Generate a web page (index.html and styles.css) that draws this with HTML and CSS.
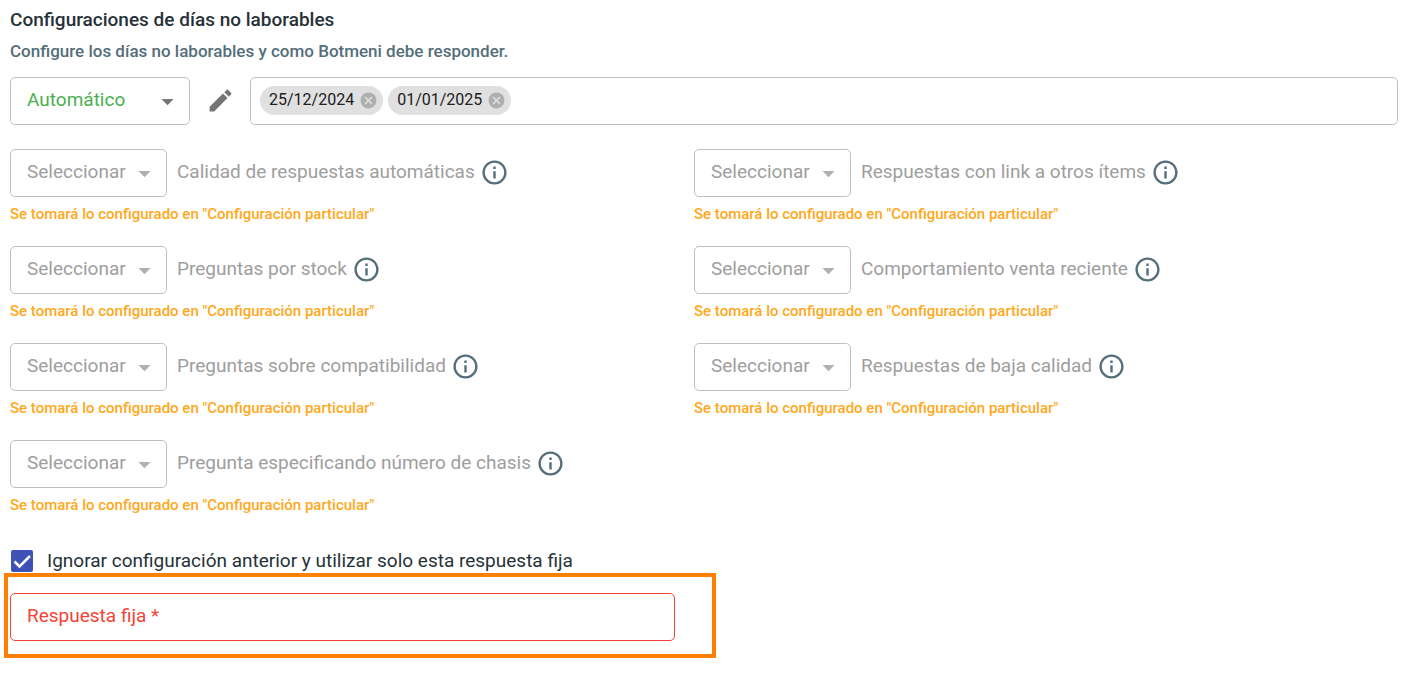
FILE: index.html
```html
<!DOCTYPE html>
<html lang="es">
<head>
<meta charset="utf-8">
<title>Configuraciones de días no laborables</title>
<link rel="stylesheet" href="styles.css">
</head>
<body>
<svg class="sprite" aria-hidden="true">
  <symbol id="arrow" viewBox="0 0 24 24"><path d="M7 10l5 5 5-5z"/></symbol>
  <symbol id="info" viewBox="0 0 24 24"><path d="M11 7h2v2h-2zm0 4h2v6h-2zm1-9C6.480 2 2 6.480 2 12s4.480 10 10 10 10-4.480 10-10S17.520 2 12 2zm0 18c-4.410 0-8-3.590-8-8s3.590-8 8-8 8 3.590 8 8-3.590 8-8 8z"/></symbol>
  <symbol id="cancel" viewBox="0 0 24 24"><path d="M12 2C6.470 2 2 6.470 2 12s4.470 10 10 10 10-4.470 10-10S17.530 2 12 2zm5 13.590L15.590 17 12 13.410 8.410 17 7 15.590 10.590 12 7 8.410 8.410 7 12 10.590 15.590 7 17 8.410 13.410 12 17 15.590z"/></symbol>
</svg>
<main class="page">
  <h1 class="title">Configuraciones de días no laborables</h1>
  <p class="subtitle">Configure los días no laborables y como Botmeni debe responder.</p>

  <div class="toolbar">
    <div class="picker picker-mode">
      <select class="select" aria-label="Modo"><option>Automático</option></select>
      <svg class="arrow"><use href="#arrow"/></svg>
    </div>
    <button class="icon-button edit" type="button" aria-label="Editar"><svg viewBox="0 0 24 24"><path d="M3 17.250V21h3.750L17.810 9.940l-3.750-3.750L3 17.250zM20.710 7.040c.390-.390.390-1.020 0-1.410l-2.340-2.340c-.390-.390-1.020-.390-1.410 0l-1.830 1.830 3.750 3.750 1.830-1.830z"/></svg></button>
    <div class="dates">
      <span class="chip">25/12/2024<button class="icon-button remove" type="button" aria-label="Quitar 25/12/2024"><svg><use href="#cancel"/></svg></button></span>
      <span class="chip">01/01/2025<button class="icon-button remove" type="button" aria-label="Quitar 01/01/2025"><svg><use href="#cancel"/></svg></button></span>
    </div>
  </div>

  <div class="options">
    <div class="option">
      <div class="option-row">
        <div class="picker"><select class="select" id="o1" disabled><option>Seleccionar</option></select><svg class="arrow"><use href="#arrow"/></svg></div>
        <label class="option-label" for="o1">Calidad de respuestas automáticas</label>
        <button class="icon-button info" type="button" aria-label="Información"><svg><use href="#info"/></svg></button>
      </div>
      <p class="hint">Se tomará lo configurado en "Configuración particular"</p>
    </div>
    <div class="option">
      <div class="option-row">
        <div class="picker"><select class="select" id="o2" disabled><option>Seleccionar</option></select><svg class="arrow"><use href="#arrow"/></svg></div>
        <label class="option-label" for="o2">Respuestas con link a otros ítems</label>
        <button class="icon-button info" type="button" aria-label="Información"><svg><use href="#info"/></svg></button>
      </div>
      <p class="hint">Se tomará lo configurado en "Configuración particular"</p>
    </div>
    <div class="option">
      <div class="option-row">
        <div class="picker"><select class="select" id="o3" disabled><option>Seleccionar</option></select><svg class="arrow"><use href="#arrow"/></svg></div>
        <label class="option-label" for="o3">Preguntas por stock</label>
        <button class="icon-button info" type="button" aria-label="Información"><svg><use href="#info"/></svg></button>
      </div>
      <p class="hint">Se tomará lo configurado en "Configuración particular"</p>
    </div>
    <div class="option">
      <div class="option-row">
        <div class="picker"><select class="select" id="o4" disabled><option>Seleccionar</option></select><svg class="arrow"><use href="#arrow"/></svg></div>
        <label class="option-label" for="o4">Comportamiento venta reciente</label>
        <button class="icon-button info" type="button" aria-label="Información"><svg><use href="#info"/></svg></button>
      </div>
      <p class="hint">Se tomará lo configurado en "Configuración particular"</p>
    </div>
    <div class="option">
      <div class="option-row">
        <div class="picker"><select class="select" id="o5" disabled><option>Seleccionar</option></select><svg class="arrow"><use href="#arrow"/></svg></div>
        <label class="option-label" for="o5">Preguntas sobre compatibilidad</label>
        <button class="icon-button info" type="button" aria-label="Información"><svg><use href="#info"/></svg></button>
      </div>
      <p class="hint">Se tomará lo configurado en "Configuración particular"</p>
    </div>
    <div class="option">
      <div class="option-row">
        <div class="picker"><select class="select" id="o6" disabled><option>Seleccionar</option></select><svg class="arrow"><use href="#arrow"/></svg></div>
        <label class="option-label" for="o6">Respuestas de baja calidad</label>
        <button class="icon-button info" type="button" aria-label="Información"><svg><use href="#info"/></svg></button>
      </div>
      <p class="hint">Se tomará lo configurado en "Configuración particular"</p>
    </div>
    <div class="option">
      <div class="option-row">
        <div class="picker"><select class="select" id="o7" disabled><option>Seleccionar</option></select><svg class="arrow"><use href="#arrow"/></svg></div>
        <label class="option-label" for="o7">Pregunta especificando número de chasis</label>
        <button class="icon-button info" type="button" aria-label="Información"><svg><use href="#info"/></svg></button>
      </div>
      <p class="hint">Se tomará lo configurado en "Configuración particular"</p>
    </div>
  </div>

  <div class="ignore">
    <span class="check">
      <input class="check-input" type="checkbox" id="ignore" checked>
      <svg class="check-mark" viewBox="0 0 22 22"><path d="M3.500 11.500l5 5L19 6"/></svg>
    </span>
    <label class="ignore-label" for="ignore">Ignorar configuración anterior y utilizar solo esta respuesta fija</label>
  </div>

  <div class="fixed-row">
    <div class="fixed-field">
      <input class="fixed-input" type="text" id="fixed" required>
      <label class="fixed-label" for="fixed">Respuesta fija *</label>
      <span class="highlight"></span>
    </div>
  </div>
</main>
</body>
</html>
```
FILE: styles.css
```css
* { box-sizing: border-box; }

body {
  margin: 0;
  background: #fff;
  color: #263238;
  font-family: Roboto, "Liberation Sans", sans-serif;
  font-size: 19px;
  line-height: 24px;
}

.sprite { display: none; }
svg { fill: currentColor; }

.page { padding: 8px 11px 32px 10px; }

.title {
  margin: 0;
  font-size: 19px;
  font-weight: 500;
  line-height: 24px;
}

.subtitle {
  margin: 7px 0 14px;
  color: #546e7a;
  font-size: 17px;
  font-weight: 500;
  line-height: 24px;
}

.toolbar {
  display: grid;
  grid-template-columns: 180px 60px 1fr;
  align-items: center;
}

.picker {
  display: grid;
  flex: none;
  align-items: center;
  width: 157px;
}
.picker-mode { width: 180px; }

.select {
  grid-area: 1 / 1;
  appearance: none;
  width: 100%;
  height: 48px;
  padding: 0 16px 3px;
  border: 1px solid #c0c0c0;
  border-radius: 5px;
  background: #fff;
  color: #4caf50;
  font: inherit;
}
.select:disabled { color: #9e9e9e; opacity: 1; }

.arrow {
  grid-area: 1 / 1;
  justify-self: end;
  width: 29px;
  height: 29px;
  margin-right: 8px;
  color: #b0b0b0;
  pointer-events: none;
}
.picker-mode .arrow { color: #757575; }

.icon-button {
  display: flex;
  flex: none;
  padding: 0;
  border: 0;
  background: none;
  cursor: pointer;
}
.icon-button svg { width: 100%; height: 100%; }

.edit {
  width: 29px;
  height: 29px;
  margin-bottom: 2px;
  justify-self: center;
  color: #757575;
}

.dates {
  display: flex;
  align-items: center;
  gap: 5px;
  height: 48px;
  padding: 0 9px 2px;
  border: 1px solid #c0c0c0;
  border-radius: 5px;
}

.chip {
  display: flex;
  align-items: center;
  gap: 5px;
  height: 29px;
  padding: 0 5px 0 9px;
  border-radius: 15px;
  background: #e0e0e0;
  color: #212121;
  font-size: 16px;
}

.remove { width: 19px; height: 19px; color: #abafb0; }

.options {
  display: grid;
  grid-template-columns: 1fr 1fr;
  row-gap: 20px;
  padding: 24px 20px 0 0;
}

.option-row { display: flex; align-items: center; }

.option-label {
  margin-left: 10px;
  padding-bottom: 2px;
  color: #9e9e9e;
}

.info {
  width: 29px;
  height: 29px;
  margin: 0 0 2px 5px;
  color: #546e7a;
}

.hint {
  margin: 5px 0 0;
  color: #ffa81a;
  font-size: 15px;
  font-weight: 500;
  line-height: 24px;
}

.ignore {
  display: flex;
  align-items: center;
  gap: 14px;
  padding: 32px 0 0 1px;
}

.check { display: grid; width: 22px; height: 22px; }
.check-input {
  grid-area: 1 / 1;
  appearance: none;
  width: 22px;
  height: 22px;
  margin: 0;
  border-radius: 2px;
  background: #3f51b5;
}
.check-mark {
  grid-area: 1 / 1;
  width: 22px;
  height: 22px;
  fill: none;
  stroke: #fff;
  stroke-width: 2.5;
  pointer-events: none;
}

.fixed-row {
  display: grid;
  grid-template-columns: 1fr 1fr;
  padding: 20px 20px 0 0;
}

.fixed-field {
  position: relative;
  display: grid;
  align-items: center;
  margin-right: 19px;
  color: #f44336;
}

.fixed-input {
  grid-area: 1 / 1;
  width: 100%;
  height: 48px;
  padding: 0 16px;
  border: 1px solid #f44336;
  border-radius: 5px;
  background: #fff;
  font: inherit;
}

.fixed-label {
  grid-area: 1 / 1;
  justify-self: start;
  padding: 0 17px 2px;
  pointer-events: none;
}

.highlight {
  position: absolute;
  inset: -20px -41px -17px -6px;
  border: 4px solid #ff8000;
  border-radius: 1px;
  pointer-events: none;
}
```
